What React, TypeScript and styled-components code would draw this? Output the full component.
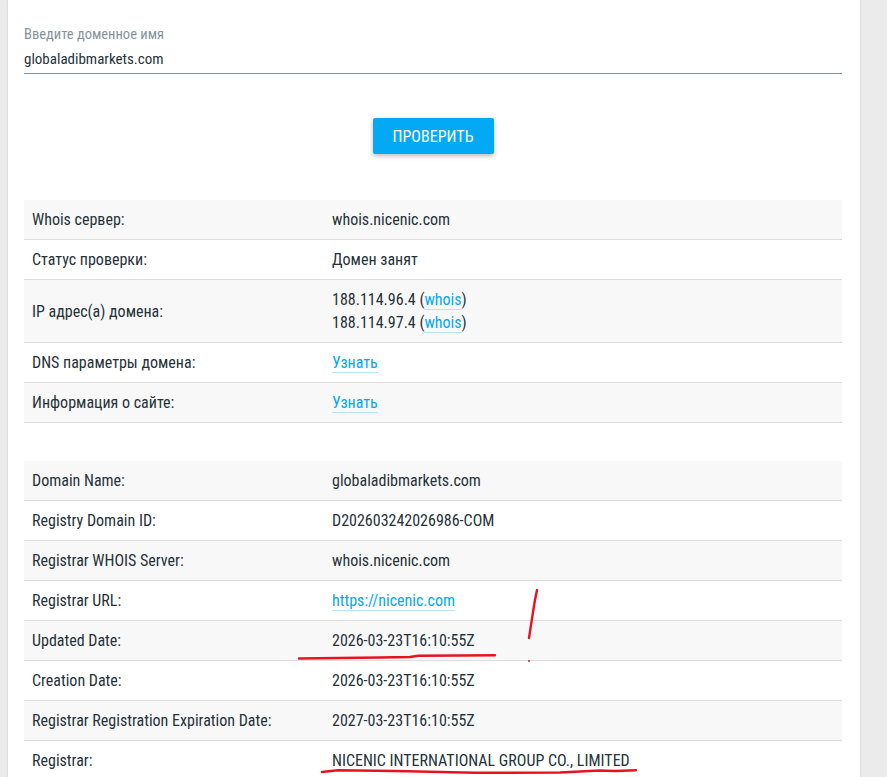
import React from "react";
import styled, { createGlobalStyle } from "styled-components";

const GlobalStyle = createGlobalStyle`
  html, body {
    margin: 0;
    padding: 0;
    background: #ebebeb;
  }
  body {
    font-family: "Roboto Condensed", "Liberation Sans Narrow", Roboto, sans-serif;
    color: #263238;
  }
  * { box-sizing: border-box; }
`;

const Page = styled.div`
  position: relative;
  width: 887px;
  height: 777px;
  overflow: hidden;
  padding-left: 8px;
`;

const Panel = styled.main`
  width: 852px;
  min-height: 777px;
  background: #fff;
  box-shadow: 0 0 2px rgba(0, 0, 0, 0.18);
  padding: 27px 18px 0 16px;
`;

const Field = styled.label`
  display: flex;
  flex-direction: column;
  gap: 6px;
  padding-bottom: 4px;
  border-bottom: 1px solid #78909c;
`;

const FieldLabel = styled.span`
  font-size: 14.5px;
  line-height: 16px;
  color: #86949c;
`;

const FieldInput = styled.input`
  border: none;
  outline: none;
  padding: 0;
  margin: 0;
  font: inherit;
  font-size: 15px;
  line-height: 20px;
  height: 20px;
  color: #263238;
  background: transparent;
`;

const ButtonRow = styled.div`
  display: flex;
  justify-content: center;
  margin-top: 44px;
`;

const CheckButton = styled.button`
  height: 36px;
  width: 121px;
  padding: 0;
  border: none;
  border-radius: 2px;
  background: #03a9f4;
  color: #fff;
  font: inherit;
  font-size: 16px;
  text-transform: uppercase;
  box-shadow: 0 2px 5px rgba(0, 0, 0, 0.28);
  cursor: pointer;
`;

const Table = styled.table<{ $gap: number }>`
  width: 100%;
  border-collapse: collapse;
  margin-top: ${(p) => p.$gap}px;
  font-size: 16px;
  line-height: 23px;
`;

const Row = styled.tr`
  border-bottom: 1px solid #dddddd;
  &:nth-child(odd) {
    background: #f8f8f8;
  }
`;

const LabelCell = styled.td`
  width: 300px;
  padding: 8px 8px;
  vertical-align: middle;
`;

const ValueCell = styled.td`
  padding: 8px 8px;
  vertical-align: middle;
`;

const Link = styled.a`
  color: #03a9f4;
  text-decoration: none;
  border-bottom: 1px solid #b3e5fc;
`;

const Marks = styled.svg`
  position: absolute;
  left: 0;
  top: 0;
  pointer-events: none;
`;

type Item = { label: string; value: React.ReactNode };

const statusRows: Item[] = [
  { label: "Whois сервер:", value: "whois.nicenic.com" },
  { label: "Статус проверки:", value: "Домен занят" },
  {
    label: "IP адрес(а) домена:",
    value: (
      <>
        188.114.96.4 (<Link href="#">whois</Link>)
        <br />
        188.114.97.4 (<Link href="#">whois</Link>)
      </>
    ),
  },
  { label: "DNS параметры домена:", value: <Link href="#">Узнать</Link> },
  { label: "Информация о сайте:", value: <Link href="#">Узнать</Link> },
];

const whoisRows: Item[] = [
  { label: "Domain Name:", value: "globaladibmarkets.com" },
  { label: "Registry Domain ID:", value: "D202603242026986-COM" },
  { label: "Registrar WHOIS Server:", value: "whois.nicenic.com" },
  { label: "Registrar URL:", value: <Link href="#">https://nicenic.com</Link> },
  { label: "Updated Date:", value: "2026-03-23T16:10:55Z" },
  { label: "Creation Date:", value: "2026-03-23T16:10:55Z" },
  { label: "Registrar Registration Expiration Date:", value: "2027-03-23T16:10:55Z" },
  { label: "Registrar:", value: "NICENIC INTERNATIONAL GROUP CO., LIMITED" },
];

function InfoTable({ rows, gap }: { rows: Item[]; gap: number }) {
  return (
    <Table $gap={gap}>
      <tbody>
        {rows.map((r) => (
          <Row key={r.label}>
            <LabelCell>{r.label}</LabelCell>
            <ValueCell>{r.value}</ValueCell>
          </Row>
        ))}
      </tbody>
    </Table>
  );
}

export default function App() {
  return (
    <>
      <GlobalStyle />
      <Page>
        <Panel>
          <Field>
            <FieldLabel>Введите доменное имя</FieldLabel>
            <FieldInput defaultValue="globaladibmarkets.com" />
          </Field>
          <ButtonRow>
            <CheckButton>Проверить</CheckButton>
          </ButtonRow>
          <InfoTable rows={statusRows} gap={46} />
          <InfoTable rows={whoisRows} gap={38} />
        </Panel>
        <Marks width={887} height={777} viewBox="0 0 887 777">
          <g fill="none" stroke="#e8131f" strokeWidth={2.4} strokeLinecap="round" strokeLinejoin="round">
            <polyline points="299,658.5 340,658 380,657.5 410,657 418,655.8 460,655.5 495,655.2" />
            <polyline points="537,590 535,600 533,612 531,625 529,638" />
            <polyline points="322,772 338,770.3 395,771 475,772.8 560,772.5 600,770.5 615,771 636,770.3" />
          </g>
          <circle cx={529} cy={661} r={1} fill="#e8131f" />
        </Marks>
      </Page>
    </>
  );
}
